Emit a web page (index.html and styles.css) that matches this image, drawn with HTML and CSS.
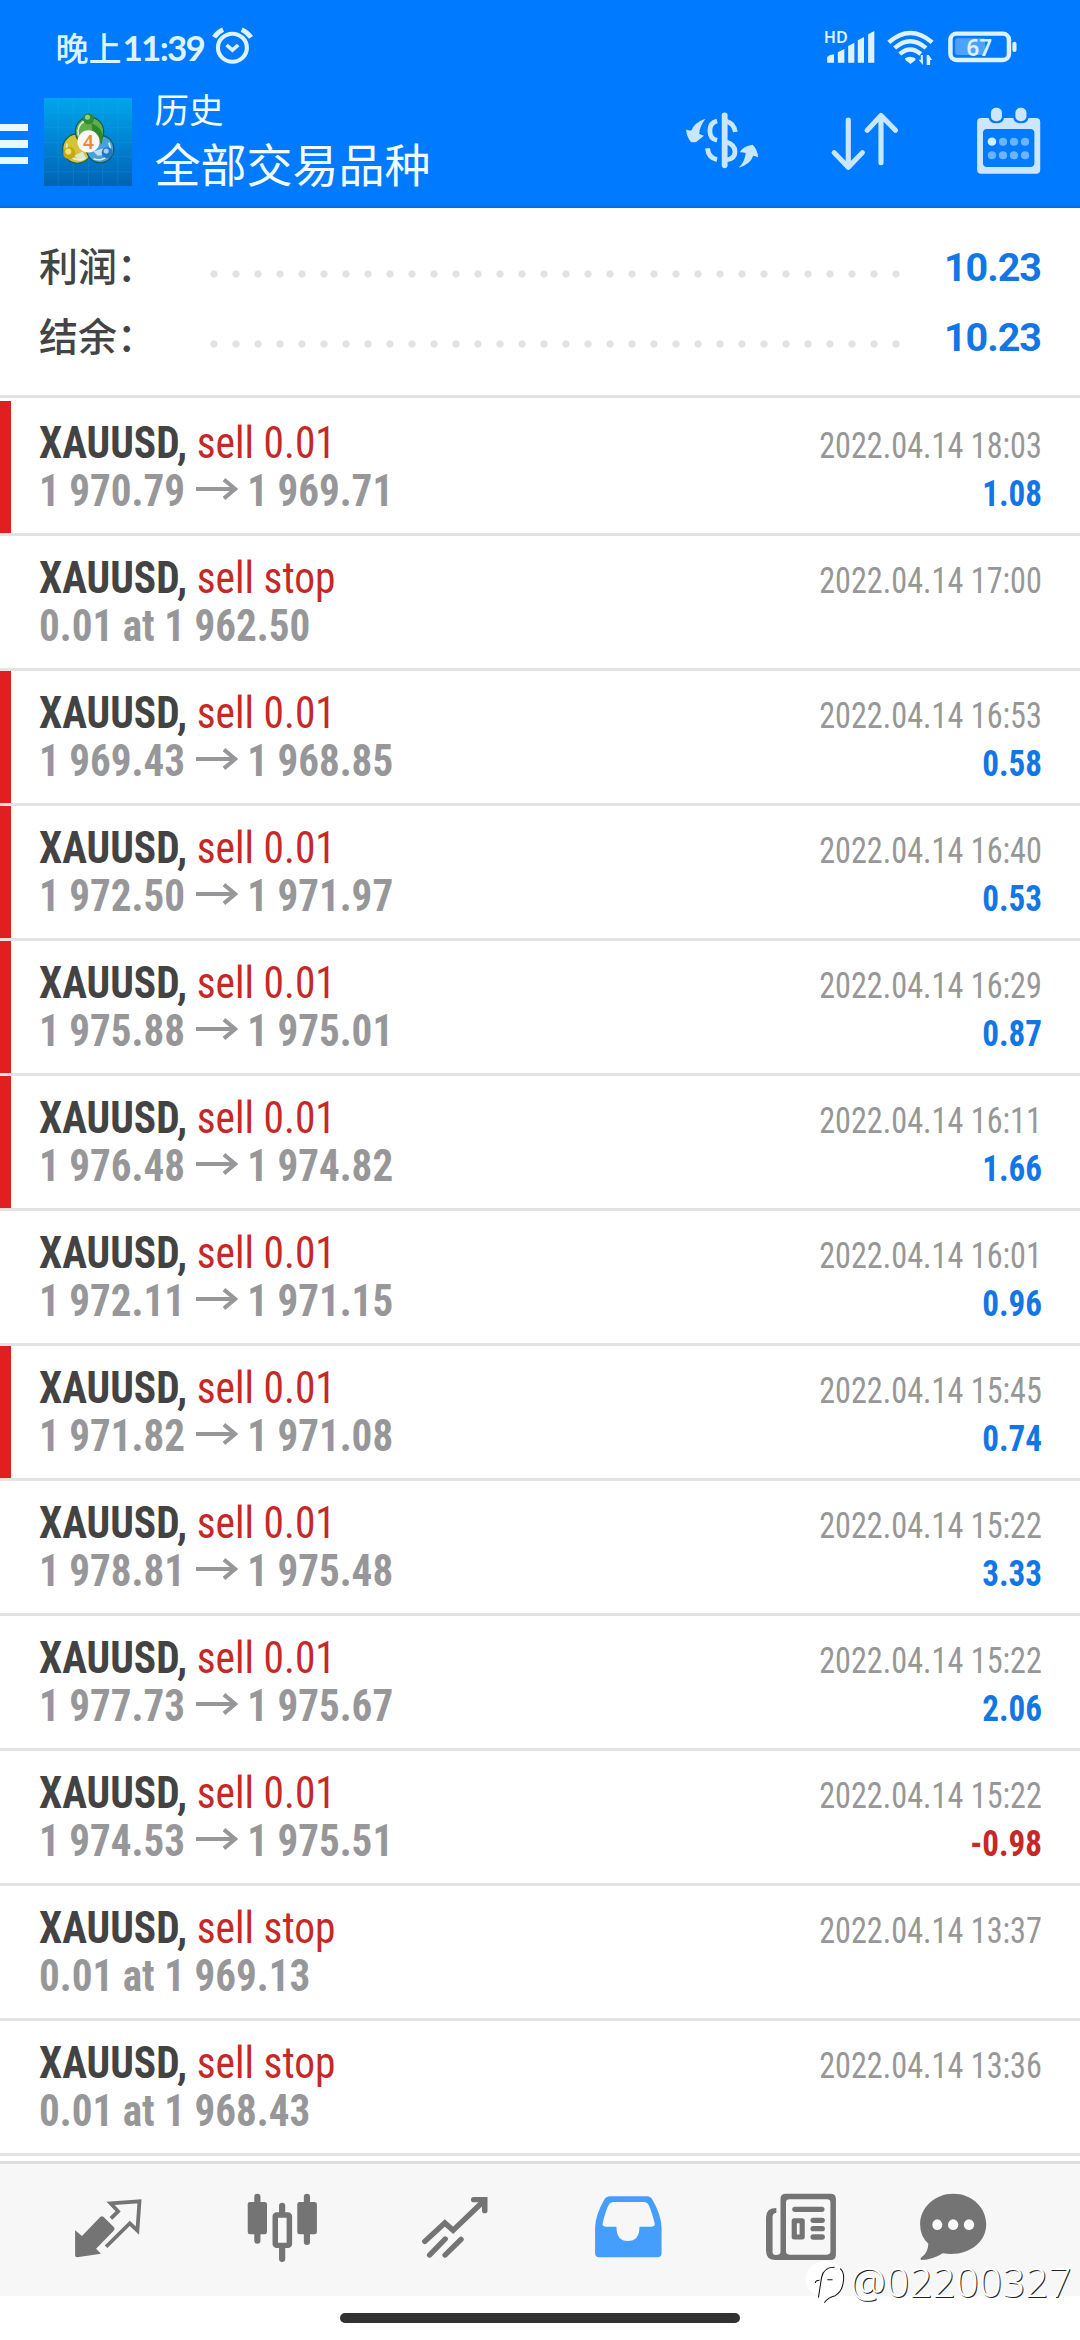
FILE: index.html
```html
<!DOCTYPE html>
<html lang="zh-CN">
<head>
<meta charset="utf-8">
<title>历史</title>
<link rel="stylesheet" href="styles.css">
</head>
<body>
<svg class="defs" aria-hidden="true">
  <symbol id="arrow" viewBox="0 0 126 66" preserveAspectRatio="none">
    <path d="M0 33H118M84 5L118 33L84 61" fill="none" stroke="currentColor" stroke-width="12"/>
  </symbol>
</svg>
<div class="screen">
  <header class="header">
    <div class="status">
      <div class="clock"><span class="period">晚上</span><span class="time">11:39</span></div>
      <svg class="alarm" viewBox="610 80 130 120" preserveAspectRatio="none">
        <g fill="none" stroke="#dcf3ff" stroke-width="12">
          <circle cx="675" cy="145" r="42"/>
          <path d="M622 114Q632 98 648 91M702 91Q718 98 729 114" stroke-width="14"/>
          <path d="M658 137L675 152L692 137" stroke-width="11"/>
        </g>
      </svg>
      <svg class="signals" viewBox="820 85 580 120" preserveAspectRatio="none">
        <g fill="#dcf3ff">
          <text x="825" y="129" font-size="48" textLength="70" lengthAdjust="spacingAndGlyphs" class="badge">HD</text>
          <path d="M835 172Q842 164 855 164V189H835ZM866 158L885 148V189H866ZM896 139L914 129V189H896ZM924 122L942 112V189H924ZM954 104L972 94V189H954Z"/>
          <path d="M1061 176Q1076 166 1091 176V182L1077 193L1063 182Z"/>
          <rect x="1207" y="116" width="87" height="50" rx="6" fill="#fff" opacity=".3"/>
          <text x="1240" y="168" font-size="68" textLength="74" lengthAdjust="spacingAndGlyphs" class="badge charge">67</text>
          <rect x="1373" y="126" width="12" height="31" rx="6"/>
          <path d="M1101 180H1107V166H1113V196ZM1140 181H1134V196H1124V166H1130Z"/>
        </g>
        <g fill="none" stroke="#dcf3ff" stroke-width="13">
          <path d="M1014 128Q1076 72 1140 128"/>
          <path d="M1031 145Q1076 104 1122 145"/>
          <path d="M1046 163Q1076 136 1107 163"/>
          <rect x="1193" y="102" width="170" height="79" rx="18"/>
        </g>
      </svg>
    </div>
    <div class="appbar">
      <div class="menu"><i></i><i></i><i></i></div>
      <svg class="logo" viewBox="0 0 87 87">
        <defs>
          <linearGradient id="sky" x1="0" y1="0" x2="0" y2="1">
            <stop offset="0" stop-color="#00a6ec"/><stop offset=".45" stop-color="#0087d6"/><stop offset="1" stop-color="#0063b2"/>
          </linearGradient>
        </defs>
        <rect width="87" height="87" fill="url(#sky)"/>
        <path d="M0 14H87M0 29H87M0 44H87M0 58H87M0 73H87M14 0V87M29 0V87M44 0V87M58 0V87M73 0V87" stroke="#35b4ee" stroke-width="1" opacity=".18"/>
        <g stroke="#145c5a" stroke-width="1.200">
          <circle cx="33" cy="50" r="14.500" fill="#d3c336"/>
          <circle cx="55.500" cy="50.500" r="13.500" fill="#4b9fdc"/>
          <circle cx="45" cy="33" r="14" fill="#5fae4c"/>
        </g>
        <g fill="none" stroke="#e4f3d8" stroke-width="1.500">
          <path d="M34 37A12 12 0 0 1 41 22.500"/><path d="M23 45A12.500 12.500 0 0 0 40 60"/><path d="M64 44A11.500 11.500 0 0 1 49 60"/>
        </g>
        <path d="M47 25Q61 30 57 46L48 36Z" fill="#2c8a2d"/>
        <path d="M38 53L30 57L35 62L42 60ZM49 53L58 50L60 56L53 57Z" fill="#dff0f8" opacity=".8"/>
        <circle cx="44" cy="20.500" r="5.500" fill="#328a36"/><circle cx="43" cy="19" r="2.500" fill="#8ed08a"/>
        <circle cx="25" cy="54.500" r="6" fill="#c2a915"/><circle cx="24" cy="53" r="3" fill="#efe26d"/>
        <circle cx="62.500" cy="54" r="5.500" fill="#2478c2"/><circle cx="61.500" cy="52.500" r="2.500" fill="#9ad4f7"/>
        <circle cx="44" cy="43" r="11" fill="#fbf7f2"/>
        <text x="44" y="50" text-anchor="middle" class="logo-digit">4</text>
      </svg>
      <div class="titles">
        <div class="title">历史</div>
        <div class="subtitle">全部交易品种</div>
      </div>
      <svg class="currency" viewBox="415 330 230 190" preserveAspectRatio="none">
        <path d="M424 388Q432 393 440 391Q447 368 480 356Q463 380 462 401Q470 406 476 407L453 426Q446 428 438 426Q425 410 424 388ZM633 472Q625 467 619 467Q611 492 577 503Q595 485 597 459Q587 456 580 457Q590 438 617 434Q632 448 633 472Z" fill="#c9e6ff"/>
        <g fill="none" stroke="#c9e6ff" stroke-width="14">
          <path d="M514 363Q493 368 493 392Q493 416 514 421M486 445Q489 474 514 479"/>
          <path d="M536 346V496" stroke-width="17" stroke-linecap="round"/>
          <path d="M541 364Q563 370 567 396M541 426Q566 434 566 455Q566 476 541 480"/>
        </g>
      </svg>
      <svg class="sort" viewBox="840 330 210 190" preserveAspectRatio="none">
        <path d="M896 360V500M855 458L896 502L937 458M991 488V350M951 391L991 346L1033 391" fill="none" stroke="#c9e6ff" stroke-width="15" stroke-linecap="round" stroke-linejoin="round"/>
      </svg>
      <svg class="calendar" viewBox="1260 315 200 215" preserveAspectRatio="none">
        <path fill-rule="evenodd" fill="#cde6ff" d="M1281 354H1303Q1305 370 1325 370Q1345 370 1347 354H1374Q1376 370 1396 370Q1416 370 1418 354H1440Q1452 354 1452 366V509Q1452 521 1440 521H1281Q1269 521 1269 509V366Q1269 354 1281 354ZM1298 387Q1286 387 1286 399V489Q1286 501 1298 501H1423Q1435 501 1435 489V399Q1435 387 1423 387Z"/>
        <g fill="#cde6ff"><rect x="1309" y="323" width="32" height="41" rx="15"/><rect x="1380" y="323" width="32" height="41" rx="15"/></g>
        <g fill="#6cb4ff">
          <circle cx="1344" cy="425" r="12"/><circle cx="1376" cy="425" r="12"/><circle cx="1408" cy="425" r="12"/>
          <circle cx="1312" cy="466" r="12"/><circle cx="1344" cy="466" r="12"/><circle cx="1376" cy="466" r="12"/><circle cx="1408" cy="466" r="12"/>
        </g>
        <circle cx="1312" cy="425" r="12.500" fill="#d3f0ff"/>
      </svg>
    </div>
  </header>

  <section class="summary">
    <div class="total"><span class="label">利润：</span><span class="dots"></span><b>10.23</b></div>
    <div class="total"><span class="label">结余：</span><span class="dots"></span><b>10.23</b></div>
  </section>

  <main class="list">
    <div class="row marked"><div class="deal"><p><b>XAUUSD,</b> sell 0.01</p><p class="price">1 970.79<svg><use href="#arrow"/></svg>1 969.71</p></div><div class="meta"><time>2022.04.14 18:03</time><b>1.08</b></div></div>
    <div class="row"><div class="deal"><p><b>XAUUSD,</b> sell stop</p><p class="price">0.01 at 1 962.50</p></div><div class="meta"><time>2022.04.14 17:00</time></div></div>
    <div class="row marked"><div class="deal"><p><b>XAUUSD,</b> sell 0.01</p><p class="price">1 969.43<svg><use href="#arrow"/></svg>1 968.85</p></div><div class="meta"><time>2022.04.14 16:53</time><b>0.58</b></div></div>
    <div class="row marked"><div class="deal"><p><b>XAUUSD,</b> sell 0.01</p><p class="price">1 972.50<svg><use href="#arrow"/></svg>1 971.97</p></div><div class="meta"><time>2022.04.14 16:40</time><b>0.53</b></div></div>
    <div class="row marked"><div class="deal"><p><b>XAUUSD,</b> sell 0.01</p><p class="price">1 975.88<svg><use href="#arrow"/></svg>1 975.01</p></div><div class="meta"><time>2022.04.14 16:29</time><b>0.87</b></div></div>
    <div class="row marked"><div class="deal"><p><b>XAUUSD,</b> sell 0.01</p><p class="price">1 976.48<svg><use href="#arrow"/></svg>1 974.82</p></div><div class="meta"><time>2022.04.14 16:11</time><b>1.66</b></div></div>
    <div class="row"><div class="deal"><p><b>XAUUSD,</b> sell 0.01</p><p class="price">1 972.11<svg><use href="#arrow"/></svg>1 971.15</p></div><div class="meta"><time>2022.04.14 16:01</time><b>0.96</b></div></div>
    <div class="row marked"><div class="deal"><p><b>XAUUSD,</b> sell 0.01</p><p class="price">1 971.82<svg><use href="#arrow"/></svg>1 971.08</p></div><div class="meta"><time>2022.04.14 15:45</time><b>0.74</b></div></div>
    <div class="row"><div class="deal"><p><b>XAUUSD,</b> sell 0.01</p><p class="price">1 978.81<svg><use href="#arrow"/></svg>1 975.48</p></div><div class="meta"><time>2022.04.14 15:22</time><b>3.33</b></div></div>
    <div class="row"><div class="deal"><p><b>XAUUSD,</b> sell 0.01</p><p class="price">1 977.73<svg><use href="#arrow"/></svg>1 975.67</p></div><div class="meta"><time>2022.04.14 15:22</time><b>2.06</b></div></div>
    <div class="row"><div class="deal"><p><b>XAUUSD,</b> sell 0.01</p><p class="price">1 974.53<svg><use href="#arrow"/></svg>1 975.51</p></div><div class="meta"><time>2022.04.14 15:22</time><b class="loss">-0.98</b></div></div>
    <div class="row"><div class="deal"><p><b>XAUUSD,</b> sell stop</p><p class="price">0.01 at 1 969.13</p></div><div class="meta"><time>2022.04.14 13:37</time></div></div>
    <div class="row"><div class="deal"><p><b>XAUUSD,</b> sell stop</p><p class="price">0.01 at 1 968.43</p></div><div class="meta"><time>2022.04.14 13:36</time></div></div>
  </main>

  <nav class="tabs">
    <svg viewBox="210 150 210 225" preserveAspectRatio="none">
      <path d="M219 271L239 288L292 231Q297 226 302 231L332 262Q336 267 331 272L280 326L294 341L225 352Q219 352 219 346Z" fill="#747474"/>
      <path d="M323 235L344 214L322 190L406 184L400 272L378 250L309 320" fill="none" stroke="#747474" stroke-width="11"/>
    </svg>
    <svg viewBox="711 150 210 225" preserveAspectRatio="none">
      <g fill="#747474"><rect x="716" y="186" width="56" height="97" rx="7"/><rect x="860" y="186" width="57" height="97" rx="7"/></g>
      <path d="M744 170V302M888 170V306M816 197V220M816 320V357" fill="none" stroke="#747474" stroke-width="18" stroke-linecap="round"/>
      <rect x="796" y="225" width="41" height="91" rx="4" fill="none" stroke="#747474" stroke-width="16"/>
    </svg>
    <svg viewBox="1214 150 210 225" preserveAspectRatio="none">
      <path d="M1231 304L1289 249L1313 271L1405 180M1373 179H1405V212M1245 345L1290 297M1290 345L1336 298" fill="none" stroke="#747474" stroke-width="16" stroke-linecap="round"/>
    </svg>
    <svg viewBox="149 150 210 225" preserveAspectRatio="none">
      <path fill-rule="evenodd" fill="#459dfc" d="M202 169H309Q319 169 325 180Q350 225 351 262V340Q351 352 339 352H170Q158 352 158 340V262Q159 225 184 180Q190 169 202 169ZM212 186Q202 186 197 196Q188 214 180 250Q178 260 188 260H220Q220 303 253 303Q287 303 287 260H322Q333 260 331 250Q322 214 314 196Q309 186 299 186Z"/>
    </svg>
    <svg viewBox="653 150 210 225" preserveAspectRatio="none">
      <path fill-rule="evenodd" fill="#747474" d="M714 161H843Q859 161 859 177V344Q859 360 843 360H684Q656 360 656 332V232Q656 204 686 204V218Q675 219 675 232V336Q675 345 684 345Q698 345 698 336V177Q698 161 714 161ZM724 178Q714 178 714 188V334Q714 344 724 344H833Q843 344 843 334V188Q843 178 833 178Z"/>
      <path d="M740 208H818M793 241H819M793 266H819M793 291H819" fill="none" stroke="#747474" stroke-width="16" stroke-linecap="round"/>
      <rect x="738" y="242" width="23" height="49" fill="none" stroke="#747474" stroke-width="15" stroke-linejoin="round"/>
    </svg>
    <svg viewBox="1094 150 210 225" preserveAspectRatio="none">
      <path d="M1199 161C1254 161 1295 202 1295 253C1295 312 1237 352 1169 340Q1140 359 1107 360Q1101 358 1107 352Q1126 337 1127 311Q1103 290 1103 253C1103 202 1146 161 1199 161Z" fill="#747474"/>
      <g fill="#f9f9f9"><ellipse cx="1153" cy="254" rx="14.500" ry="16"/><ellipse cx="1199" cy="254" rx="15" ry="16"/><ellipse cx="1245" cy="254" rx="15" ry="16"/></g>
    </svg>
  </nav>
  <footer class="gesture"><span></span></footer>
  <div class="watermark">
    <svg viewBox="770 365 120 132" preserveAspectRatio="none">
      <path d="M828 368A56 55 0 1 0 828 478Q833 480 826 494Q884 470 884 420Q884 372 828 368Z" fill="#fff"/>
      <path d="M809 478L818 418Q824 386 856 387M800 434Q801 426 812 426M835 424H850M872 391Q884 400 882 425Q880 458 858 472Q838 476 826 493" fill="none" stroke="#111" stroke-width="3"/>
    </svg>
    <span>@02200327</span>
  </div>
</div>
</body>
</html>
```
FILE: styles.css
```css
* { box-sizing: border-box; margin: 0; padding: 0; }
body { background: #fff; }
svg { display: block; flex: none; }
.defs { width: 0; height: 0; position: absolute; }
.screen {
  position: relative;
  width: 1080px;
  height: 2340px;
  overflow: hidden;
  display: flex;
  flex-direction: column;
  background: #fff;
  font-family: "Roboto Condensed", Roboto, "Noto Sans CJK SC", sans-serif;
}

/* header */
.header {
  height: 208px;
  flex: none;
  background: linear-gradient(#007aff 204px, #0a6ad6 208px);
  color: #f2fcff;
  font-family: "Noto Sans CJK SC", sans-serif;
}
.status { height: 75px; padding: 26px 58px 0 55.500px; display: flex; align-items: flex-start; }
.clock { width: 154.500px; height: 44px; line-height: 42px; display: flex; font-weight: 500; color: #dcf3ff; }
.period { font-size: 33px; width: 67px; }
.time { font-family: Lato, sans-serif; font-weight: 700; font-size: 35px; letter-spacing: -1.7px; }
.alarm { width: 44.8px; height: 40px; }
.signals { width: 199.7px; height: 40px; margin: 2px 0 0 auto; overflow: visible; }
.badge { font-family: "Noto Sans", sans-serif; font-weight: 600; }
.appbar { height: 133px; padding-right: 37px; display: flex; align-items: flex-start; }
.menu { width: 27.500px; margin: 48.500px 16.500px 0 0; display: flex; flex-direction: column; gap: 9px; }
.menu i { height: 7.500px; background: #eaf9ff; }
.logo { width: 88px; height: 88px; margin-top: 23px; }
.logo-digit { font-family: "Noto Sans", sans-serif; font-weight: 600; font-size: 19px; fill: #ee8a3a; }
.titles { margin: 12px 0 0 22.500px; white-space: nowrap; }
.title { font-size: 34.500px; line-height: 42px; }
.subtitle { font-size: 46px; line-height: 56px; margin-top: 5px; }
.currency { width: 79.2px; height: 63.300px; margin: 35px 0 0 auto; }
.sort { width: 72.300px; height: 63.300px; margin: 35px 0 0 67px; }
.calendar { width: 69px; height: 71.700px; margin: 30px 0 0 72.500px; }

/* totals */
.summary { height: 190px; flex: none; padding: 24px 39px 0; border-bottom: 3px solid #e2e2e2; margin-bottom: 3px; }
.total { height: 70px; display: flex; align-items: center; }
.label { width: 171px; font: 500 39px/70px "Noto Sans CJK SC", sans-serif; color: #444; white-space: nowrap; padding-bottom: 6px; }
.dots {
  width: 690px;
  height: 8px;
  margin-top: 14px;
  background: radial-gradient(circle at 4px 4px, #e2e2e2 3.300px, transparent 4px) 0 0 / 22px 8px repeat-x;
}
.total b { margin-left: auto; font: 700 39.500px/70px Roboto, sans-serif; color: #1276e4; letter-spacing: -1px; padding-top: 2px; }

/* deals */
.list { flex: none; }
.row {
  height: 135px;
  padding: 18px 38px 0 39px;
  border-bottom: 3px solid #e3e3e3;
  display: flex;
  justify-content: space-between;
}
.row.marked {
  background: linear-gradient(#e01f20, #e01f20) 0 0 / 11px 100% no-repeat;
  border-image: linear-gradient(90deg, #f3dede 11px, #e3e3e3 11px) 3;
}
.deal p { height: 48px; font-size: 44px; line-height: 48px; color: #c62828; white-space: nowrap; transform: scaleX(.941); transform-origin: 0 0; }
.deal b { color: #434343; }
.deal .price { display: flex; align-items: center; font-weight: 700; color: #97979a; transform: scaleX(.934); }
.price svg { width: 45px; height: 22px; margin: 0 10px 5px 11.500px; }
.meta { padding-top: 3px; display: flex; flex-direction: column; align-items: flex-end; font-size: 36px; line-height: 48px; }
.meta time { color: #979797; transform: scaleX(.895); transform-origin: 100% 0; }
.meta b { color: #1276e4; transform: scaleX(.92); transform-origin: 100% 0; }
.meta .loss { color: #c62828; }

/* bottom navigation */
.tabs {
  height: 135px;
  flex: none;
  margin-top: 5px;
  padding: 26px 0 0 22px;
  border-top: 3px solid #dedede;
  background: #f7f7f7;
  display: grid;
  grid-template-columns: repeat(5, 173.200px) 131px;
  justify-items: center;
}
.tabs svg { width: 72.300px; height: 75px; }
.gesture { flex: 1; padding-top: 17px; background: #fff; }
.gesture span { display: block; width: 400px; height: 10px; margin: 0 auto; border-radius: 5px; background: #323232; }

/* author mark over the page corner */
.watermark { position: absolute; left: 805px; top: 2260px; display: flex; align-items: center; }
.watermark svg { width: 41.300px; height: 44px; }
.watermark span { margin-left: 4px; font: 300 40px/44px "Noto Sans", sans-serif; letter-spacing: .35px; color: #fff; text-shadow: 1px 1px 0 #222; }
```
